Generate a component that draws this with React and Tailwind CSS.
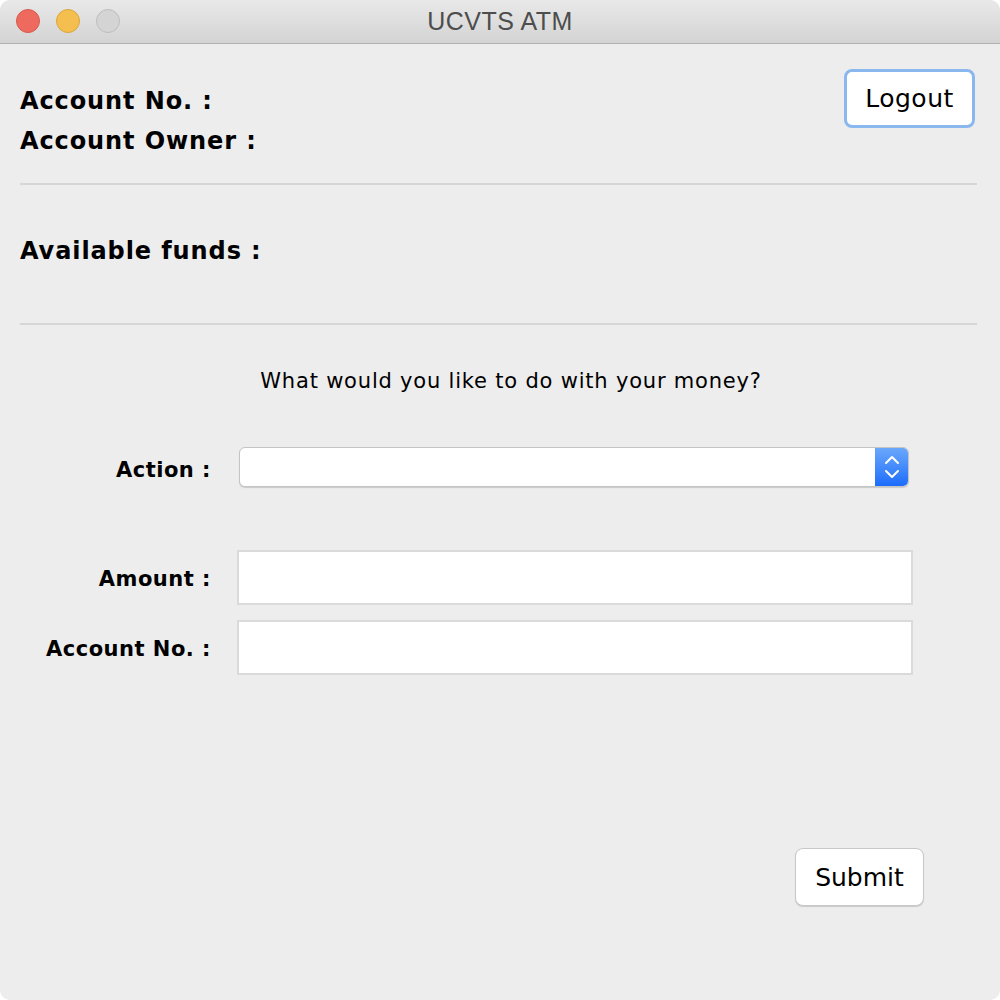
import React from "react";

export default function App() {
  const font = { fontFamily: '"DejaVu Sans", "Liberation Sans", sans-serif' };
  return (
    <div className="w-[1000px] h-[1000px] bg-white">
      <div
        className="w-[1000px] h-[1000px] bg-[#ededed] rounded-[10px] overflow-hidden flex flex-col text-black"
        style={font}
      >
        {/* Title bar */}
        <div className="relative h-[44px] shrink-0 bg-gradient-to-b from-[#e9e9e9] to-[#d3d3d3] border-b border-[#b1b1b1] flex items-center justify-center">
          <div className="absolute left-[16px] top-[9px] flex gap-[16px]">
            <div className="w-[24px] h-[24px] rounded-full bg-[#ee6a5f] border border-[#d65a4f]" />
            <div className="w-[24px] h-[24px] rounded-full bg-[#f5bf4f] border border-[#d9a63c]" />
            <div className="w-[24px] h-[24px] rounded-full bg-[#d4d4d4] border border-[#bdbdbd]" />
          </div>
          <span className="text-[25px] tracking-[0.5px] text-[#4d4d4d] leading-none" style={{ fontFamily: '"Liberation Sans", sans-serif' }}>UCVTS ATM</span>
        </div>

        <div className="pl-[20px] pr-[23px] flex flex-col">
          <div className="flex justify-between items-start">
            <div className="pt-[37px] flex flex-col font-bold text-[24px] tracking-[0.9px]">
              <div className="h-[40px] leading-[40px]">Account No. :</div>
              <div className="h-[40px] leading-[40px]">Account Owner :</div>
            </div>
            <button className="mt-[25px] mr-[2px] w-[131px] h-[59px] rounded-[8px] bg-white border-[3px] border-[#8ab8ee] text-[25px] tracking-[0.5px] flex items-center justify-center">
              Logout
            </button>
          </div>
          <div className="mt-[22px] h-[2px] bg-[#d6d6d6]" />
          <div className="mt-[46px] h-[40px] leading-[40px] font-bold text-[24px] tracking-[0.9px]">Available funds :</div>
          <div className="mt-[52px] h-[2px] bg-[#d6d6d6]" />
          <div className="mt-[41px] h-[30px] leading-[30px] text-center text-[21px] tracking-[0.8px] pl-[25px]">
            What would you like to do with your money?
          </div>

          <div className="mt-[51px] flex items-center">
            <div className="w-[191px] text-right font-bold text-[21px] tracking-[0.5px] pt-[7px]">Action :</div>
            <div className="ml-[28px] w-[670px] h-[40px] bg-white rounded-[6px] border border-[#c4c4c4] shadow-[0_1px_1px_rgba(0,0,0,0.15)] flex justify-end overflow-hidden">
              <div className="w-[33px] h-full bg-gradient-to-b from-[#6aa7fb] to-[#1a6cfb] flex items-center justify-center">
                <svg width="16" height="26" viewBox="0 0 16 26" fill="none" stroke="white" strokeWidth="2" strokeLinecap="round" strokeLinejoin="round">
                  <path d="M2 9 L8 3 L14 9" />
                  <path d="M2 17 L8 23 L14 17" />
                </svg>
              </div>
            </div>
          </div>

          <div className="mt-[63px] flex items-center">
            <div className="w-[191px] text-right font-bold text-[21px] tracking-[0.5px] pt-[4px]">Amount :</div>
            <div className="ml-[26px] w-[676px] h-[55px] bg-white border-2 border-[#dadada]" />
          </div>
          <div className="mt-[15px] flex items-center">
            <div className="w-[191px] text-right font-bold text-[21px] tracking-[0.5px] pt-[4px]">Account No. :</div>
            <div className="ml-[26px] w-[676px] h-[55px] bg-white border-2 border-[#dadada]" />
          </div>

          <div className="mt-[173px] flex justify-end pr-[53px]">
            <button className="w-[129px] h-[58px] rounded-[8px] bg-white border border-[#c8c8c8] shadow-[0_1px_1px_rgba(0,0,0,0.15)] text-[25px] pt-[1px] flex items-center justify-center">
              Submit
            </button>
          </div>
        </div>
      </div>
    </div>
  );
}
